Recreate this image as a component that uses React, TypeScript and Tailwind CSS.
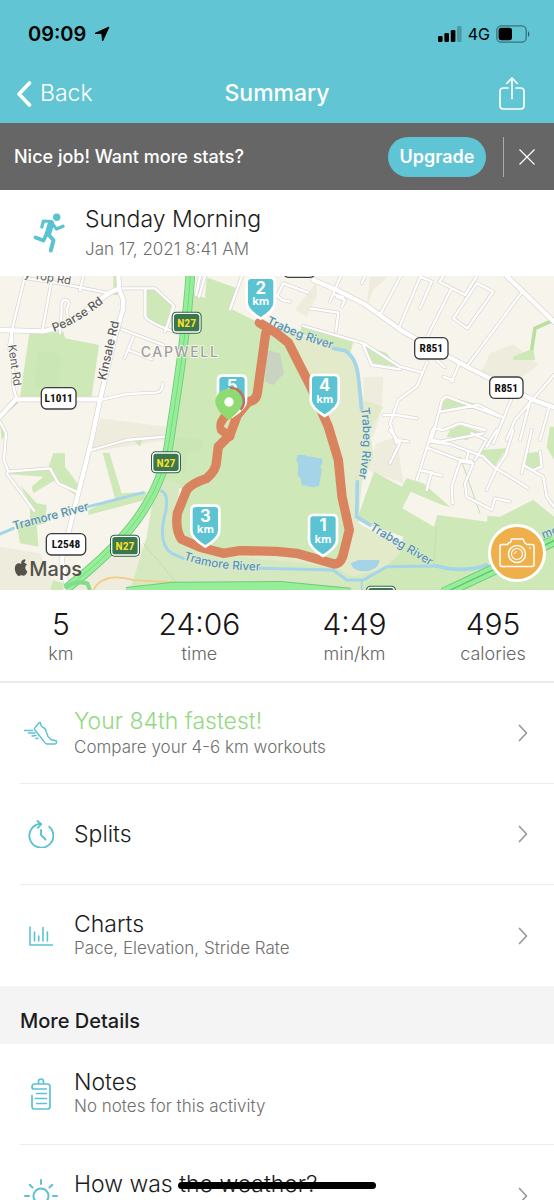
import React from "react";

const TEAL = "#5bc2d1";

function StatusBar() {
  return (
    <div className="flex h-16 items-center justify-between pt-1 pl-7 pr-6 text-black">
      <div className="flex items-center gap-2">
        <span className="text-xl font-semibold">09:09</span>
        <svg className="size-4" viewBox="0 0 16 16" aria-hidden="true">
          <path d="M15 1 1 7.400h6.800L8.600 15z" fill="#000" stroke="#000" strokeLinejoin="round" />
        </svg>
      </div>
      <div className="flex items-center gap-[6px]">
        <svg className="h-4 w-6" viewBox="0 0 24 16" aria-hidden="true">
          <rect x="0" y="10" width="4.6" height="6" rx="1.2" />
          <rect x="6.4" y="7" width="4.6" height="9" rx="1.2" />
          <rect x="12.8" y="4" width="4.6" height="12" rx="1.2" />
          <rect x="19" y="0" width="4.6" height="16" rx="1.2" fillOpacity=".22" />
        </svg>
        <span className="text-base leading-6">4G</span>
        <svg className="h-[18px] w-[34px]" viewBox="0 0 34 18" aria-hidden="true">
          <rect x=".8" y=".8" width="29.4" height="16.4" rx="4.5" fill="none" stroke="#000" strokeOpacity=".42" strokeWidth="1.3" />
          <rect x="2.6" y="2.8" width="13.4" height="12.4" rx="2.6" />
          <path d="M32 6.2c1.8.8 1.8 4.8 0 5.6z" fillOpacity=".5" />
        </svg>
      </div>
    </div>
  );
}

function Header() {
  return (
    <header className="shrink-0 bg-[#61c5d4] text-white">
      <StatusBar />
      <div className="grid h-[59px] grid-cols-3 items-center px-4">
        <button className="flex items-center gap-2 justify-self-start text-[23px] font-light">
          <svg className="h-7 w-4" viewBox="0 0 16 28" fill="none" aria-hidden="true">
            <path d="M13.5 3 3 14l10.500 11" stroke="#fff" strokeWidth="3.6" strokeLinecap="round" strokeLinejoin="round" />
          </svg>
          Back
        </button>
        <h1 className="text-center text-[23px] font-medium">Summary</h1>
        <button aria-label="Share" className="mr-3 justify-self-end">
          <svg className="h-9 w-7" viewBox="0 0 28 36" fill="none" stroke="#fff" strokeWidth="1.7" strokeLinecap="round" strokeLinejoin="round" aria-hidden="true">
            <path d="M10 12H5.500Q2 12 2 15.500v14Q2 33 5.500 33h17q3.500 0 3.500-3.500v-14q0-3.500-3.500-3.500H18M14 22.500V2.500M8.700 7.500 14 2l5.300 5.500" />
          </svg>
        </button>
      </div>
    </header>
  );
}

function Banner() {
  return (
    <div className="flex h-[67px] shrink-0 items-center bg-[#666] pl-[14px] text-white">
      <p className="flex-1 text-[18px] font-medium">Nice job! Want more stats?</p>
      <button className="h-10 w-[98px] rounded-full bg-[#5fc4d3] text-[18px] font-semibold">Upgrade</button>
      <div className="ml-[17px] h-10 w-px bg-[#aaa]" />
      <button aria-label="Dismiss" className="flex h-10 w-[50px] items-center justify-center pr-1">
        <svg className="size-[18px]" viewBox="0 0 18 18" aria-hidden="true">
          <path d="m1.500 1.500 15 15m0-15-15 15" stroke="#fff" strokeWidth="1.200" />
        </svg>
      </button>
    </div>
  );
}

function RunnerIcon() {
  return (
    <svg className="h-[42px] w-8" viewBox="0 0 32 42" fill="none" stroke={TEAL} strokeLinecap="round" strokeLinejoin="round" aria-hidden="true">
      <circle cx="23.700" cy="5.200" r="3.700" fill={TEAL} stroke="none" />
      <path d="M18 11.500 15 21.500" strokeWidth="6.400" />
      <path d="M18.500 9.500 10.500 9 8.800 15" strokeWidth="3.200" />
      <path d="M19.500 12 23.500 17 30 14.200" strokeWidth="3.200" />
      <path d="m15.500 22.500 5 5.700-2.700 10.300" strokeWidth="4" />
      <path d="m13.500 22-3 6.500-8-3" strokeWidth="3.800" />
    </svg>
  );
}

function Shield({ x, y, w, text }: { x: number; y: number; w: number; text: string }) {
  return (
    <g transform={`translate(${x} ${y})`}>
      <rect x={-w / 2} y="-32" width={w} height="64" rx="15" fill="#fff" stroke="#3c3c3c" strokeWidth="4" />
      {text && <text y="12" textAnchor="middle" fontSize="34" fontWeight="700" fill="#111" className="font-['Liberation_Sans_Narrow','Roboto_Condensed','Roboto',sans-serif]">{text}</text>}
    </g>
  );
}

function GreenShield({ x, y, text = "N27" }: { x: number; y: number; text?: string }) {
  return (
    <g transform={`translate(${x} ${y})`}>
      <rect x="-45" y="-33" width="90" height="66" rx="14" fill="#2e6544" />
      <rect x="-40" y="-28" width="80" height="56" rx="10" fill="#3b774c" stroke="#fff" strokeWidth="4" />
      {text && <text y="13" textAnchor="middle" fontSize="35" fontWeight="700" fill="#f7df2e" className="font-['Liberation_Sans_Narrow','Roboto_Condensed','Roboto',sans-serif]">{text}</text>}
    </g>
  );
}

function KmPin({ x, y, n }: { x: number; y: number; n: number }) {
  return (
    <g transform={`translate(${x} ${y})`}>
      <path d="M-29-123H29Q42-123 42-110V-48C42-28 16-10 0 0C-16-10-42-28-42-48V-110Q-42-123-29-123Z" fill="#5bc3d2" stroke="#fff" strokeWidth="8" />
      <text y="-75" textAnchor="middle" fontSize="50" fontWeight="700" fill="#fff">{n}</text>
      <text y="-40" textAnchor="middle" fontSize="32" fontWeight="700" fill="#fff" className="font-['Open_Sans',sans-serif]">km</text>
    </g>
  );
}

const ROADS = [
  // north west
  "M75 18 36 180 26 235M36 180 40 350 50 388M155 30 127 182M250 18 240 62M80 25 180 40 330 70",
  "M180 190 185 120Q180 90 198 90Q214 95 200 118L205 150M368 55H465L522 108 495 185M436 58V140Q450 160 535 190",
  "M365 178 490 225M400 200 373 265M385 240 455 268M300 390 380 372 470 368Q490 362 488 340",
  "M395 508 495 500M275 540 380 510 500 500M0 455 18 490 12 570 25 605M25 605 150 595 175 640 235 668M20 610 102 722",
  "M600 18 588 75M615 18 597 80M725 20 690 118",
  // north east
  "M830 80 850 40 925 68M830 75 845 90 870 95M1022 18 990 95M1010 80 1035 90 1025 110M1000 72 1030 82M1085 40 1095 18",
  "M930 115 1015 128 1008 182M1202 18 1140 135M1262 18 1196 175M1265 22 1295 35 1260 115M1352 60 1282 200M1330 18 1318 35 1395 75 1430 20M1430 40 1480 65 1402 175 1360 145 1430 40",
  "M1567 65 1400 290M1310 270 1335 292M1378 280 1355 335M1330 320 1360 332",
  "M910 168 1090 220 1200 290 1268 308M1090 225 1115 285 1200 298M1282 275 1250 350 1195 390 1170 460 1190 520M1150 435H1190L1250 445M1662 315 1545 450 1520 510",
  "M1340 380Q1325 385 1322 405L1295 510M1340 380 1500 440M1322 425 1435 405 1505 440M1300 475 1330 480 1380 460 1455 480M1533 390 1480 520M1590 395 1560 510M1648 410 1620 510M1295 508 1320 515 1450 490",
  // south east
  "M1170 480 1200 520 1170 580M1190 510 1225 515M1297 480 1250 630M1260 600 1325 617M1295 605 1280 660M1290 515 1350 522 1450 560 1480 590 1585 655M1280 532 1380 570 1415 575",
  "M1380 575 1355 650 1358 700M1385 575 1420 580 1395 640 1400 680 1475 720 1485 685 1530 695M1405 545 1400 570M1415 490 1460 510 1425 570M1490 480 1460 530M1520 550 1490 595 1460 660M1540 480 1515 560M1595 480 1565 610M1570 585 1630 620 1640 680 1662 710M1620 545 1625 590 1600 600",
];

const MAIN_ROADS = [
  "M0 180 130 184Q200 172 260 120Q320 70 352 58M355 18 358 60 370 90 368 120 345 200 300 390 275 510 232 680 185 870 200 945",
  "M50 388H298M50 385 0 440",
  "M940 30 1010 60 1090 100 1210 185 1300 235 1400 290 1500 340 1600 390 1662 412M1520 18 1662 155",
];

const ROUTE =
  "M778 158 830 190 865 218 932 350 985 470 1015 570 1026 680 1048 780 1028 860Q1020 882 1003 882L890 850 830 844 720 842 670 850 600 832 545 808Q525 780 532 730L560 660Q575 640 620 625Q650 600 650 570L655 530 690 495 712 435 745 395Q768 392 772 370L797 190";

function RouteMap() {
  return (
    <svg className="block w-full" viewBox="0 18 1662 942" role="img" aria-label="Route map">
      <rect width="1662" height="960" fill="#f7f4ec" />
      {/* land */}
      <g fill="#eeeddd">
        <path d="M1120 60 1162 20H1110L1100 110ZM950 35 885 120 920 140 950 80ZM1440 315 1470 250 1540 222 1600 270 1615 285 1560 325ZM300 445 500 470V510L275 545ZM0 830 120 850 170 960H0ZM1090 320H1150L1145 420 1120 500H1090Z" />
        <path d="M1100 600 1130 520 1190 500 1210 640ZM330 860 400 790 530 960H200Z" />
      </g>
      <path fill="#e3eaca" d="M770 150 830 175 1040 235 1075 300 1090 390 1150 410 1110 480 1120 560 1085 640 1075 760 1200 830 1240 960H400L560 640 800 200Z" />
      <path fill="#cee8b8" d="M580 70 700 120 770 155 850 220 925 345 990 500 1018 570 1030 690 1045 780 1020 880 700 845 590 830 530 780 555 660 500 640 470 610 515 480Z" />
      <path fill="#d5e8c0" d="M470 620 540 640 520 790 620 850 1000 890 1060 920 1240 870 1320 960H390L440 800Z" />
      <path fill="#cee8b8" d="M1070 750 1122 605 1205 650 1220 625 1270 640 1350 710 1430 735 1500 740 1600 690 1662 740V960H1080L1200 850 1210 800Z" />
      <g fill="#cee8b8">
        <path d="M88 190 190 185 195 205 297 225 275 380H60ZM438 58 470 60 515 105 495 180 440 145ZM340 18H356V75H340ZM620 22 710 55 690 120 615 85ZM905 165 1060 215 1050 250 900 190ZM1093 225 1160 250 1190 290 1120 280ZM1328 395 1350 380 1440 405 1350 425 1325 420ZM1350 480 1380 465 1440 485 1400 510 1340 500ZM1540 260 1600 235 1605 270 1540 270ZM1650 470H1662V570L1640 530ZM1440 540 1520 535 1480 595 1450 570ZM1575 550 1620 545 1625 590 1580 600Z" />
        <path d="M160 550H195V590L240 650 225 675 165 630 100 670 95 650 130 620 20 612 145 592ZM308 548H328L365 670 440 665 435 690 265 735 265 720 345 685ZM50 760H110L115 830 60 820ZM400 510 430 505 420 530ZM160 930 190 940V960H150ZM60 645 110 700 140 705 135 760 90 770 90 700Z" />
        <path d="M1345 480H1420L1400 508ZM0 460 20 490 5 510Z" />
      </g>
      <path d="M0 440 50 395M1662 150 1605 175 1595 240" fill="none" stroke="#b9dfa1" strokeWidth="11" />
      <path fill="#c7e4b0" d="M112 242 182 252 178 348 105 350ZM530 500 610 510 605 540 560 550 555 610 515 600Z" opacity=".6" />
      <path fill="#f7f4ec" d="M1232 665 1327 705 1462 738V755L1312 735 1302 770 1207 715Z" />
      <path fill="#c9cbc5" d="M800 240 840 250 852 310 820 345 795 335Z" opacity=".7" />
      <path d="M1380 560 1440 730M1310 770 1300 890M430 820 540 950" stroke="#c2dfab" strokeWidth="3" fill="none" />

      {/* streets */}
      <g fill="none" strokeLinecap="round" strokeLinejoin="round">
        {ROADS.map((d) => (<path key={d} d={d} stroke="#d8d5d2" strokeWidth="11" />))}
        {MAIN_ROADS.map((d) => (<path key={d} d={d} stroke="#d8d5d2" strokeWidth="17" />))}
        {ROADS.map((d) => (<path key={d + "f"} d={d} stroke="#fff" strokeWidth="7" />))}
        {MAIN_ROADS.map((d) => (<path key={d + "f"} d={d} stroke="#fff" strokeWidth="13" />))}
      </g>

      {/* water */}
      <g fill="none" stroke="#a5d5e8" strokeWidth="9" strokeLinecap="round">
        <path d="M0 792 40 775M265 710 430 668M485 663Q505 670 498 720Q470 820 515 850L550 865M780 895 1000 900 1040 930H1090L1160 890 1310 888" />
        <path d="M1000 235 1035 242Q1068 262 1075 320L1085 420M1072 635 1070 740 1110 765M1310 888Q1390 910 1460 885" strokeWidth="11" />
        <path d="M1085 930V960" strokeWidth="5" />
      </g>
      <g fill="#a5d3e8">
        <path d="M892 556Q905 552 922 558L966 566 967 582 961 588 965 602 957 648 940 652 905 645 902 625 893 615 895 580 889 572Z" />
        <path d="M1052 880 1075 870 1138 870Q1140 890 1110 902Q1060 910 1052 880Z" />
      </g>

      {/* trunk roads */}
      <g fill="none" strokeLinejoin="round">
        <path d="M280 960Q310 905 400 930L560 940 720 945" stroke="#f4c982" strokeWidth="5" />
        <path d="M380 968 520 952 840 950 1050 970M1330 970 1500 890 1662 812" stroke="#72c77b" strokeWidth="34" />
        <path d="M380 968 520 952 840 950 1050 970M1330 970 1500 890 1662 812" stroke="#94ef98" strokeWidth="28" />
        <path d="M1330 970 1500 890 1662 812" stroke="#68bf72" strokeWidth="4" />
        <path d="M572 0C560 200 530 360 510 500Q495 620 430 720Q360 830 200 955" stroke="#72c77b" strokeWidth="29" />
        <path d="M572 0C560 200 530 360 510 500Q495 620 430 720Q360 830 200 955" stroke="#94ef98" strokeWidth="24" />
        <path d="M572 0C560 200 530 360 510 500Q495 620 430 720Q360 830 200 955" stroke="#7bd783" strokeWidth="3" />
        <path d="M195 955Q220 930 262 940L270 960" stroke="#82dc88" strokeWidth="12" />
      </g>

      {/* labels */}
      <defs>
        <path id="pearse" d="M162 186Q240 160 345 70" />
        <path id="trabeg-n" d="M798 160Q900 212 1030 246" />
        <path id="trabeg-e" d="M1083 414Q1100 540 1066 670" />
        <path id="tramore-s" d="M550 868Q650 905 830 902" />
      </defs>
      <g fontSize="36" fontWeight="500" fill="#5c5c5c" stroke="#fbfaf5" strokeWidth="5" paintOrder="stroke" strokeLinejoin="round">
        <text><textPath href="#pearse">Pearse Rd</textPath></text>
        <text transform="translate(317 332) rotate(-77)">Kinsale Rd</text>
        <text transform="translate(24 226) rotate(82)" fontSize="34" fontWeight="400">Kent Rd</text>
        <text transform="translate(72 22) rotate(9)" fontSize="34" fontWeight="400">y Top Rd</text>
        <text x="422" y="262" fontSize="42" fill="#a09f9d" className="tracking-[5px]">CAPWELL</text>
      </g>
      <g fontSize="35" fontWeight="500" fill="#5791b5" stroke="#e2efdf" strokeWidth="3" paintOrder="stroke">
        <text><textPath href="#trabeg-n">Trabeg River</textPath></text>
        <text><textPath href="#trabeg-e">Trabeg River</textPath></text>
        <text transform="translate(1108 778) rotate(31)">Trabeg River</text>
        <text transform="translate(42 780) rotate(-15)">Tramore River</text>
        <text><textPath href="#tramore-s">Tramore River</textPath></text>
        <text transform="translate(1630 806) rotate(-20)">mo</text>
      </g>

      <Shield x={176} y={385} w={104} text="L1011" />
      <Shield x={198} y={823} w={118} text="L2548" />
      <Shield x={1294} y={235} w={100} text="R851" />
      <Shield x={1519} y={353} w={100} text="R851" />
      <Shield x={898} y={-10} w={96} text="" />
      <GreenShield x={560} y={158} />
      <GreenShield x={498} y={577} />
      <GreenShield x={375} y={827} />
      <GreenShield x={1143} y={980} text="" />

      {/* route */}
      <path d={ROUTE} fill="none" stroke="#d9845f" strokeWidth="28" strokeLinecap="round" strokeLinejoin="round" />
      <path d="M685 430Q655 455 664 480L690 500" fill="none" stroke="#d9845f" strokeWidth="26" strokeLinecap="round" />
      <circle cx="677" cy="468" r="5" fill="#e3ddb4" />

      <KmPin x={782} y={146} n={2} />
      <KmPin x={974} y={438} n={4} />
      <KmPin x={969} y={858} n={1} />
      <KmPin x={616} y={830} n={3} />
      <KmPin x={696} y={440} n={5} />
      <path d="M689 354A40 40 0 0 1 722 420" fill="none" stroke="#c76e4e" strokeWidth="7" />
      <path d="M686 357A38 38 0 0 1 720 415C714 430 697 440 686 451C675 440 658 430 652 415A38 38 0 0 1 686 357Z" fill="#90db71" />
      <circle cx="687" cy="396" r="14" fill="#fff" />

      {/* attribution */}
      <g transform="translate(44 868)" fill="#55524b">
        <path d="M28 12C32 4 35 1 29 0C22 2 18 8 20 13C23 14 26 13 28 12ZM36 34C30 28 31 19 37 16C32 8 25 11 20 13C14 11 8 10 3 17C-3 29 3 43 10 49C14 51 17 48 21 48C25 49 28 51 32 47C35 44 37 39 38 37Z" />
        <text x="44" y="51" fontSize="60" fontWeight="500">Maps</text>
      </g>
    </svg>
  );
}

function CameraButton() {
  return (
    <button aria-label="Add photo" className="absolute right-2 bottom-2 flex size-[58px] items-center justify-center rounded-full border-[3px] border-white bg-[#efb04b]">
      <svg className="h-[30px] w-9" viewBox="0 0 36 30" fill="none" stroke="#fff" strokeWidth="1.500" strokeLinejoin="round" aria-hidden="true">
        <path d="M1 8.500Q1 6.500 3 6.500H8.500L9.500 4.800 11.500 4.500 12.500 1H24L25.500 4.500 28 6.500H33Q35 6.500 35 8.500V26.500Q35 28.500 33 28.500H3Q1 28.500 1 26.500Z" />
        <circle cx="18" cy="16" r="8.500" />
        <circle cx="18" cy="16" r="5.500" strokeWidth="1.200" />
        <path d="M15.500 16q.3-2.300 2.500-2.500M30 10h2" strokeWidth="1.200" />
      </svg>
    </button>
  );
}

const STATS = [
  { value: "5", unit: "km", width: "w-[22%]" },
  { value: "24:06", unit: "time", width: "w-[28%]" },
  { value: "4:49", unit: "min/km", width: "w-[28%]" },
  { value: "495", unit: "calories", width: "w-[22%]" },
];

function Stats() {
  return (
    <dl className="flex h-[93px] border-b-2 border-[#e9e9e9] pt-4">
      {STATS.map((s) => (
        <div key={s.unit} className={`flex flex-col-reverse justify-end text-center ${s.width}`}>
          <dt className="text-lg leading-6 font-light text-[#666]">{s.unit}</dt>
          <dd className="text-[30px] leading-9 font-light text-[#161616]">{s.value}</dd>
        </div>
      ))}
    </dl>
  );
}

function Row({ icon, title, note, accent, divided, chevron = true }: { icon: React.ReactNode; title: string; note?: string; accent?: boolean; divided?: boolean; chevron?: boolean }) {
  return (
    <a href="#" className="flex h-[101px] pl-5">
      <span className={divided ? "flex flex-1 items-center border-b border-[#ececec]" : "flex flex-1 items-center"}>
        <span className="flex w-[42px] shrink-0 justify-center">{icon}</span>
        <span className="ml-3 flex flex-1 flex-col">
          <span className={accent ? "text-[23px] leading-7 font-light text-[#93d982]" : "text-[23px] leading-6 font-light text-[#1c1c1c]"}>{title}</span>
          {note && <span className="text-[17px] leading-6 font-light text-[#6f6f6f]">{note}</span>}
        </span>
        {chevron && (
          <svg className="mr-[26px] h-[18px] w-[10px]" viewBox="0 0 10 18" fill="none" aria-hidden="true">
            <path d="m1.500 1.500 7 7.500-7 7.500" stroke="#999" strokeWidth="1.700" strokeLinecap="round" strokeLinejoin="round" />
          </svg>
        )}
      </span>
    </a>
  );
}

const line = { fill: "none", stroke: TEAL, strokeLinecap: "round", strokeLinejoin: "round" } as const;

const ShoeIcon = () => (
  <svg className="h-6 w-9" viewBox="0 0 36 24" {...line} strokeWidth="1.400" aria-hidden="true">
    <path d="M11.500 8.500Q11 7.500 12.500 6L15.800 2 17.200 1.300 18 4.500 20 6.500Q22.500 7 23.200 10.500L25 15.500 28 18.500 33.500 20V22L32 23H24Q22 22.500 21 20.500ZM1.500 9.500H9.500M5.500 12H12M9 15l4-.500M13 17.500l2-.2" />
  </svg>
);

const SplitsIcon = () => (
  <svg className="h-7 w-[26px]" viewBox="0 0 26 28" {...line} strokeWidth="1.900" aria-hidden="true">
    <path d="M21.300 6.700A12 12 0 1 1 13 3.700M9.500 1 13.300 4.200 9.800 7.800M13 10v5l4.500 4.500" />
  </svg>
);

const ChartIcon = () => (
  <svg className="h-5 w-6" viewBox="0 0 24 20" {...line} strokeWidth="1.600" aria-hidden="true">
    <path d="M1 1V19H23.500M5.500 6v9M9.700 10v5M14 1.500V15M18.400 6v9" />
  </svg>
);

const NotesIcon = () => (
  <svg className="h-8 w-5" viewBox="0 0 20 32" {...line} strokeWidth="1.700" aria-hidden="true">
    <path d="M15.300 11H3Q1 11 1 9Q1 6 3.500 6H16.500Q19 6 19 8.500V28.500Q19 31 16.500 31H3.500Q1 31 1 28.500V17.500M7.500 6V3.500Q7.500 1 10 1T12.500 3.500V6M5.700 15.500h9.600M4.500 20.500h10.800M5.700 25.500h9.600" />
  </svg>
);

const SunIcon = () => (
  <svg className="size-[34px]" viewBox="0 0 34 34" {...line} strokeWidth="2" aria-hidden="true">
    <circle cx="17" cy="17" r="7.500" />
    <path d="M17 1v4M17 29v4M1 17h4M29 17h4M5.700 5.700l2.800 2.800M25.500 25.500l2.800 2.800M5.700 28.300l2.800-2.800M25.500 8.500l2.800-2.800" />
  </svg>
);

export default function App() {
  return (
    <div className="relative flex h-screen flex-col overflow-hidden bg-white font-['Inter','Liberation_Sans',sans-serif]">
      <Header />
      <Banner />
      <main className="min-h-0 flex-1 overflow-y-auto [scrollbar-width:none]">
        <section className="flex h-[86px] items-center pl-[33px]">
          <RunnerIcon />
          <div className="ml-5">
            <h2 className="text-[23px] leading-8 font-light text-[#1c1c1c]">Sunday Morning</h2>
            <p className="text-[17px] leading-7 font-light text-[#6f6f6f]">Jan 17, 2021 8:41 AM</p>
          </div>
        </section>
        <div className="relative">
          <RouteMap />
          <CameraButton />
        </div>
        <Stats />
        <Row icon={<ShoeIcon />} title="Your 84th fastest!" note="Compare your 4-6 km workouts" accent divided />
        <Row icon={<SplitsIcon />} title="Splits" divided />
        <Row icon={<ChartIcon />} title="Charts" note="Pace, Elevation, Stride Rate" />
        <h3 className="flex h-[58px] items-center bg-[#f4f4f4] px-5 pt-3 text-xl font-medium text-[#1c1c1c]">More Details</h3>
        <Row icon={<NotesIcon />} title="Notes" note="No notes for this activity" chevron={false} divided />
        <Row icon={<SunIcon />} title="How was the weather?" note="Let us know how it really was" />
      </main>
      <div className="absolute bottom-[11px] left-1/2 h-[7px] w-[198px] -translate-x-1/2 rounded-full bg-black" />
    </div>
  );
}
